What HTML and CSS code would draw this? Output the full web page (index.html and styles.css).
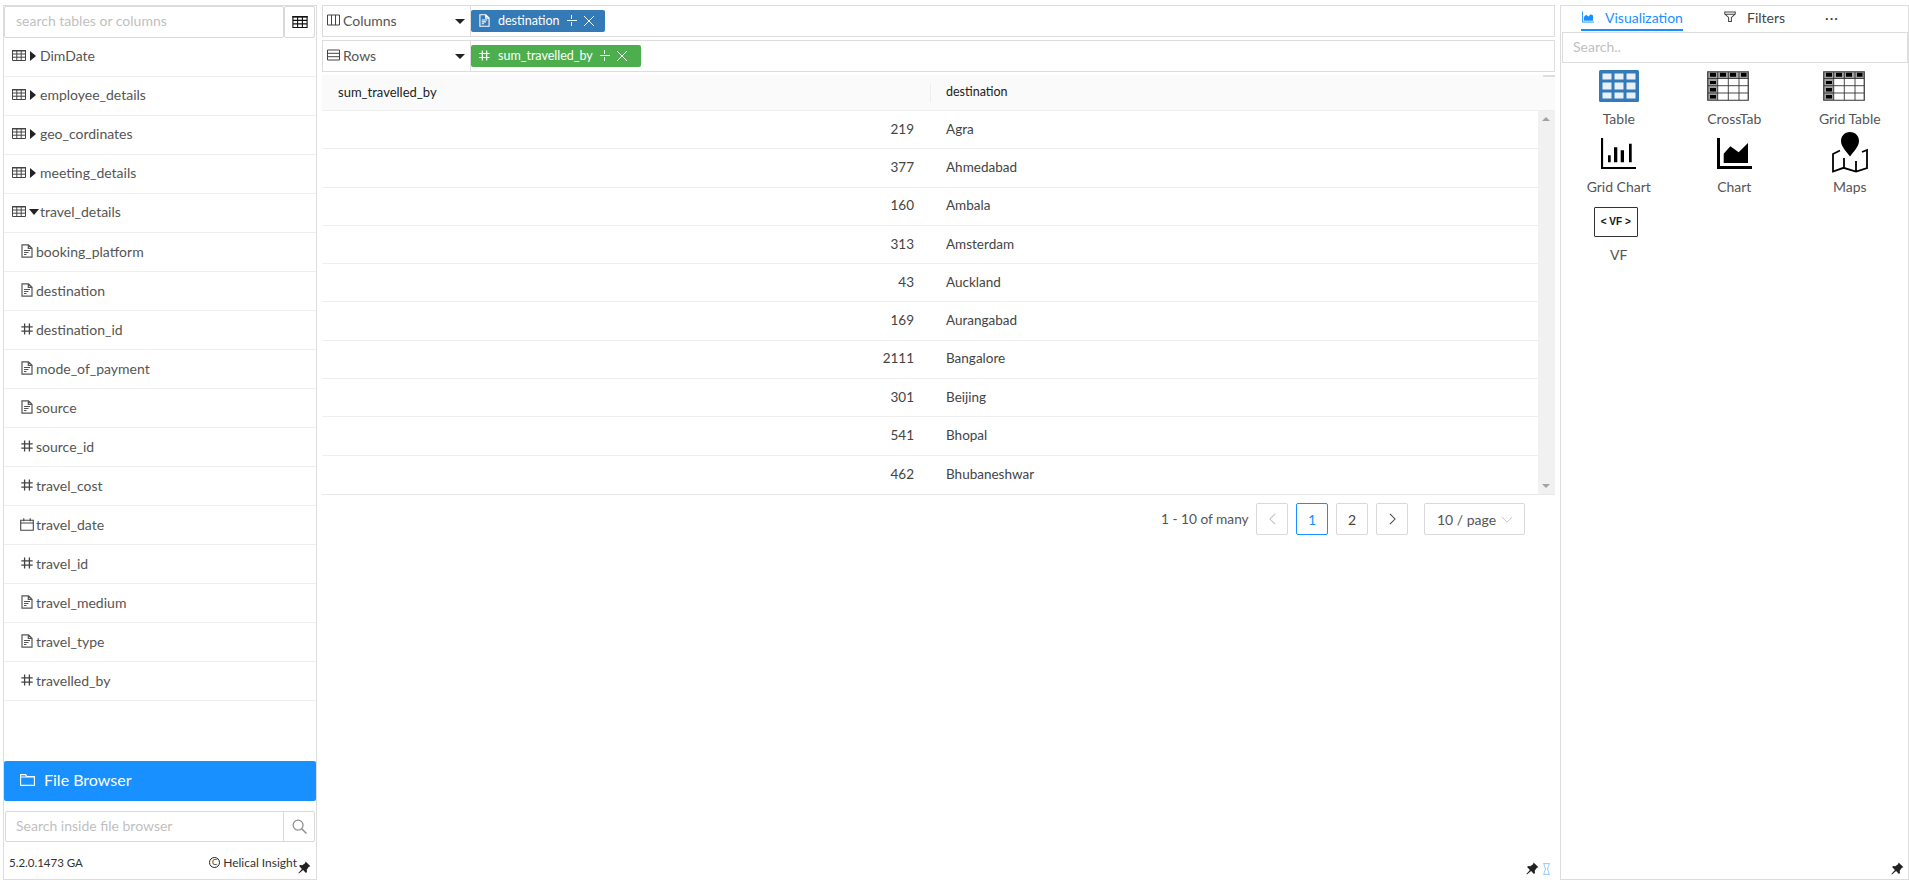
FILE: index.html
```html
<!DOCTYPE html>
<html lang="en">
<head>
<meta charset="utf-8">
<title>Helical Insight</title>
<link rel="stylesheet" href="styles.css">
</head>
<body>
<svg class="defs" width="0" height="0" aria-hidden="true">
  <symbol id="i-text" viewBox="0 0 12 14"><path d="M1 .8h6.500L11 4.300v8.900H1z M7.300 1v3.400H11" fill="none" stroke="currentColor" stroke-width="1.200"/><path d="M3 6.500h6M3 8.500h4.500M3 10.500h2.500" stroke="currentColor" stroke-width="1.200"/></symbol>
  <symbol id="i-hash" viewBox="0 0 12 12"><path d="M3.600 .5v11M8.400 .5v11M.3 3.800h11.400M.3 8.200h11.400" fill="none" stroke="currentColor" stroke-width="1.300"/></symbol>
  <symbol id="i-cal" viewBox="0 0 14 13"><path d="M.7 2.200h12.600v10.100H.7zM.7 5h12.600M3.800 .3v3M10.200 .3v3" fill="none" stroke="currentColor" stroke-width="1.100"/></symbol>
  <symbol id="i-grid" viewBox="0 0 14 11"><path d="M.5.500h13v10H.5z" fill="none" stroke="currentColor"/><path d="M0 0h14v1.500H0z" fill="currentColor"/><path d="M.5 4h13M.5 7.200h13M4.800.500v10M9.200.500v10" fill="none" stroke="currentColor"/></symbol>
  <symbol id="i-pin" viewBox="0 0 14 14"><path d="M8.200.6l5.200 5-1.700.7-2.300 3.200.3 2.300-1.200 1-3-3L1 13.500l-.6-.6 3.800-4.400-3-3 1-1.100 2.300.3 3.100-2.300z" fill="currentColor"/></symbol>
  <symbol id="i-cross" viewBox="0 0 42 30"><path d="M.750.750h40.500v28.500H.750z" fill="#fff"/><path d="M1 1h40v6.500H1zM1 7.500h9.700V29H1z" fill="#a0a0a0"/><path d="M3 1.700h6v4H3zM13 1.700h6v4h-6zM23 1.700h6v4h-6zM34 1.700h5.500v4H34zM3 10h6v3H3zM3 17h6v3.500H3zM3 24h6v3.500H3z" fill="#000"/><path d="M1 7.500h40M1 14.700h40M1 22h40M10.700 1v28M21.300 1v28M32 1v28" fill="none" stroke="#333" stroke-width=".9"/><path d="M.750.750h40.500v28.500H.750z" fill="none" stroke="#333" stroke-width="1.200"/></symbol>
</svg>

<div class="app">
  <aside class="panel left">
    <div class="search-row">
      <div class="search-box">search tables or columns</div>
      <div class="search-btn"><svg class="ic-grid"><use href="#i-grid"/></svg></div>
    </div>
    <ul class="tree">
      <li class="row group"><svg class="ic-grid"><use href="#i-grid"/></svg><span class="caret"></span>DimDate</li>
      <li class="row group"><svg class="ic-grid"><use href="#i-grid"/></svg><span class="caret"></span>employee_details</li>
      <li class="row group"><svg class="ic-grid"><use href="#i-grid"/></svg><span class="caret"></span>geo_cordinates</li>
      <li class="row group"><svg class="ic-grid"><use href="#i-grid"/></svg><span class="caret"></span>meeting_details</li>
      <li class="row group"><svg class="ic-grid"><use href="#i-grid"/></svg><span class="caret down"></span>travel_details</li>
      <li class="row field"><span class="fi"><svg class="ic-t"><use href="#i-text"/></svg></span>booking_platform</li>
      <li class="row field"><span class="fi"><svg class="ic-t"><use href="#i-text"/></svg></span>destination</li>
      <li class="row field"><span class="fi"><svg class="ic-h"><use href="#i-hash"/></svg></span>destination_id</li>
      <li class="row field"><span class="fi"><svg class="ic-t"><use href="#i-text"/></svg></span>mode_of_payment</li>
      <li class="row field"><span class="fi"><svg class="ic-t"><use href="#i-text"/></svg></span>source</li>
      <li class="row field"><span class="fi"><svg class="ic-h"><use href="#i-hash"/></svg></span>source_id</li>
      <li class="row field"><span class="fi"><svg class="ic-h"><use href="#i-hash"/></svg></span>travel_cost</li>
      <li class="row field"><span class="fi"><svg class="ic-c"><use href="#i-cal"/></svg></span>travel_date</li>
      <li class="row field"><span class="fi"><svg class="ic-h"><use href="#i-hash"/></svg></span>travel_id</li>
      <li class="row field"><span class="fi"><svg class="ic-t"><use href="#i-text"/></svg></span>travel_medium</li>
      <li class="row field"><span class="fi"><svg class="ic-t"><use href="#i-text"/></svg></span>travel_type</li>
      <li class="row field"><span class="fi"><svg class="ic-h"><use href="#i-hash"/></svg></span>travelled_by</li>
    </ul>
    <div class="file-browser">
      <svg class="ic-folder" viewBox="0 0 15 12"><path d="M.6.6h5l1.400 2h7.400v8.800H.6zM.6 3h13.800" fill="none" stroke="currentColor" stroke-width="1.100"/></svg>
      <span>File Browser</span>
    </div>
    <div class="fb-search">
      <div class="fb-input">Search inside file browser</div>
      <div class="fb-btn"><svg class="ic-search" viewBox="0 0 16 16"><circle cx="6.500" cy="6.500" r="5.300" fill="none" stroke="currentColor" stroke-width="1.300"/><path d="M10.400 10.400l5 5" stroke="currentColor" stroke-width="1.500"/></svg></div>
    </div>
    <div class="foot">
      <span class="version">5.2.0.1473 GA</span>
      <span class="copy"><span class="c-mark">C</span>Helical Insight</span>
      <svg class="pin foot-pin"><use href="#i-pin"/></svg>
    </div>
  </aside>

  <main class="center">
    <div class="shelf">
      <div class="shelf-label">
        <svg class="ic-shelf" viewBox="0 0 13 12"><path d="M.5 1h12v10H.5zM4.500 1v10M8.500 1v10" fill="none" stroke="currentColor"/></svg>
        <span class="shelf-name">Columns</span><span class="shelf-caret"></span>
      </div>
      <div class="chip blue"><svg class="ic-chip"><use href="#i-text"/></svg><span class="chip-text">destination</span><span class="chip-split"></span><span class="chip-x"></span></div>
    </div>
    <div class="shelf">
      <div class="shelf-label">
        <svg class="ic-shelf" viewBox="0 0 13 12"><path d="M.5 1h12v10H.5zM.5 4.300h12M.5 7.700h12" fill="none" stroke="currentColor"/></svg>
        <span class="shelf-name">Rows</span><span class="shelf-caret"></span>
      </div>
      <div class="chip green"><svg class="ic-chip hash"><use href="#i-hash"/></svg><span class="chip-text">sum_travelled_by</span><span class="chip-split"></span><span class="chip-x"></span></div>
    </div>

    <div class="grid-wrap">
      <div class="grid-head">
        <div class="hc hc-a">sum_travelled_by</div>
        <div class="hc hc-b">destination</div>
        <div class="head-sb"></div>
      </div>
      <div class="grid-body">
        <div class="rows">
          <div class="tr"><div class="num">219</div><div class="txt">Agra</div></div>
          <div class="tr"><div class="num">377</div><div class="txt">Ahmedabad</div></div>
          <div class="tr"><div class="num">160</div><div class="txt">Ambala</div></div>
          <div class="tr"><div class="num">313</div><div class="txt">Amsterdam</div></div>
          <div class="tr"><div class="num">43</div><div class="txt">Auckland</div></div>
          <div class="tr"><div class="num">169</div><div class="txt">Aurangabad</div></div>
          <div class="tr"><div class="num">2111</div><div class="txt">Bangalore</div></div>
          <div class="tr"><div class="num">301</div><div class="txt">Beijing</div></div>
          <div class="tr"><div class="num">541</div><div class="txt">Bhopal</div></div>
          <div class="tr"><div class="num">462</div><div class="txt">Bhubaneshwar</div></div>
        </div>
        <div class="vbar"><span class="arr up"></span><span class="arr dn"></span></div>
      </div>
    </div>

    <div class="pager">
      <span class="total">1 - 10 of many</span>
      <span class="pg muted"><svg class="chev" viewBox="0 0 8 14"><path d="M7 1L1 7l6 6" fill="none" stroke="currentColor" stroke-width="1.200"/></svg></span>
      <span class="pg active">1</span>
      <span class="pg">2</span>
      <span class="pg"><svg class="chev" viewBox="0 0 8 14"><path d="M1 1l6 6-6 6" fill="none" stroke="currentColor" stroke-width="1.200"/></svg></span>
      <span class="pg-size">10 / page<svg class="size-chev" viewBox="0 0 14 8"><path d="M1 1l6 6 6-6" fill="none" stroke="currentColor" stroke-width="1"/></svg></span>
    </div>

    <div class="center-foot">
      <svg class="pin"><use href="#i-pin"/></svg>
      <svg class="hourglass" viewBox="0 0 8 12"><path d="M.8.6h6.400M.8 11.400h6.400M1.500.6c0 3 1.500 4 1.500 5.400S1.500 8.500 1.500 11.400M6.500.6c0 3-1.500 4-1.500 5.400s1.500 2.500 1.500 5.400" fill="none" stroke="currentColor"/></svg>
    </div>
  </main>

  <aside class="panel right">
    <div class="tabs">
      <div class="tab active">
        <svg class="ic-tab" viewBox="0 0 13 12"><path d="M.5 0v11.500H13" fill="none" stroke="currentColor"/><path d="M2 10V6l2.500-2.500L7 5.500 9.500 3 12 4.500V10z" fill="currentColor"/></svg>
        Visualization
      </div>
      <div class="tab filt">
        <svg class="ic-tab" viewBox="0 0 13 12"><path d="M.8.600h11.400v2.200L8 6.500V11H5V6.500L.8 2.800zM1.500 3h10" fill="none" stroke="currentColor" stroke-width="1.100"/></svg>
        Filters
      </div>
      <div class="tab dots">···</div>
    </div>
    <div class="viz-search">Search..</div>
    <div class="viz-grid">
      <div class="viz">
        <div class="viz-ic"><svg class="v-table" viewBox="0 0 40 32"><rect width="40" height="32" rx="1.500" fill="#337ab7"/><path d="M3.500 3.500h9v6h-9zM15.500 3.500h9v6h-9zM27.500 3.500h9v6h-9zM3.500 12.500h9v7h-9zM15.500 12.500h9v7h-9zM27.500 12.500h9v7h-9zM3.500 22.500h9v6h-9zM15.500 22.500h9v6h-9zM27.500 22.500h9v6h-9z" fill="#e8f0f8"/></svg></div>
        <div class="viz-name">Table</div>
      </div>
      <div class="viz">
        <div class="viz-ic"><svg class="v-cross"><use href="#i-cross"/></svg></div>
        <div class="viz-name">CrossTab</div>
      </div>
      <div class="viz">
        <div class="viz-ic"><svg class="v-cross"><use href="#i-cross"/></svg></div>
        <div class="viz-name">Grid Table</div>
      </div>
      <div class="viz">
        <div class="viz-ic"><svg class="v-chart" viewBox="0 0 35 31"><path d="M1 0v30h34" fill="none" stroke="#000" stroke-width="2.200"/><path d="M7 17.300h2.700v7H7zM13 9.300h3.300v15H13zM19.700 12.300H23v12h-3.300zM28 5.700h2.700v18.600H28z" fill="#000"/></svg></div>
        <div class="viz-name">Grid Chart</div>
      </div>
      <div class="viz">
        <div class="viz-ic"><svg class="v-chart" viewBox="0 0 35 31"><path d="M1.500 0v29.500H35" fill="none" stroke="#000" stroke-width="3"/><path d="M6.700 15.700l6.600-7.400 8.400 6L31 5v20H6.700z" fill="#000"/></svg></div>
        <div class="viz-name">Chart</div>
      </div>
      <div class="viz">
        <div class="viz-ic"><svg class="v-map" viewBox="0 0 36 41"><path d="M8 18.500L1 22v17.500l10.500-3.700L24 39.500 35 36V18l-5 2M12 36V26M24 39V29" fill="none" stroke="#000" stroke-width="1.800"/><path d="M18 0c5.500 0 9 4 9 9 0 5.500-5 10-9 15.500C14 19 9 14.500 9 9c0-5 3.500-9 9-9z" fill="#000"/></svg></div>
        <div class="viz-name">Maps</div>
      </div>
      <div class="viz">
        <div class="viz-ic"><div class="v-vf">&lt; VF &gt;</div></div>
        <div class="viz-name">VF</div>
      </div>
    </div>
    <svg class="pin right-pin"><use href="#i-pin"/></svg>
  </aside>
</div>
</body>
</html>
```
FILE: styles.css
```css
* { box-sizing: border-box; }
html, body { margin: 0; height: 100%; overflow: hidden; background: #fff; }
body { font-family: "Lato", "Liberation Sans", sans-serif; font-size: 14px; color: #555; }
.defs { position: absolute; }
.app { display: flex; height: 880px; padding: 5px 0 0 3px; }

.panel { position: relative; border: 1px solid #ddd; background: #fff; }
.left { width: 314px; display: flex; flex-direction: column; flex: none; }
.search-row { display: flex; height: 32px; }
.search-box { width: 280px; height: 32px; border: 1px solid #d9d9d9; border-radius: 2px; padding: 0 11px; line-height: 28px; color: #bfbfbf; }
.search-btn { width: 31px; height: 32px; border: 1px solid #d9d9d9; border-radius: 2px; display: flex; align-items: center; justify-content: center; color: #222; }
.ic-grid { width: 14px; height: 11px; color: #444; flex: none; }
.search-btn .ic-grid { width: 16px; height: 12px; color: #111; }

.tree { list-style: none; margin: 0; padding: 0; flex: 1; }
.row { height: 39px; display: flex; align-items: center; padding: 0 0 2px 8px; border-bottom: 1px solid #eee; color: #555; }
.group { padding-bottom: 3px; }
.caret { width: 0; height: 0; margin: 0 4px 0 4px; border-left: 6px solid #222; border-top: 5px solid transparent; border-bottom: 5px solid transparent; }
.caret.down { margin: 0 1px 0 3px; border-left: 5px solid transparent; border-right: 5px solid transparent; border-top: 6px solid #222; border-bottom: 0; }
.field { padding-left: 13px; }
.fi { width: 19px; display: flex; justify-content: center; flex: none; }
.ic-t { width: 12px; height: 14px; color: #555; }
.ic-h { width: 12px; height: 12px; color: #444; }
.ic-c { width: 14px; height: 13px; color: #444; }

.file-browser { height: 40px; margin-bottom: 10px; padding: 0 0 3px 16px; background: #1890ff; color: #fff; font-size: 16px; display: flex; align-items: center; border-radius: 2px; flex: none; }
.ic-folder { width: 15px; height: 12px; margin-right: 9px; }
.fb-search { display: flex; height: 31px; margin: 0 1px; border: 1px solid #d9d9d9; border-radius: 2px; width: 310px; flex: none; }
.fb-input { flex: 1; padding: 0 10px; line-height: 28px; color: #bfbfbf; }
.fb-btn { width: 31px; border-left: 1px solid #d9d9d9; display: flex; align-items: center; justify-content: center; color: #8c8c8c; }
.ic-search { width: 15px; height: 15px; }
.foot { position: relative; flex: none; height: 37px; display: flex; justify-content: space-between; align-items: center; padding: 4px 19px 0 5px; font-size: 12px; color: #333; }
.version { font-size: 11.500px; }
.copy { display: flex; align-items: center; }
.c-mark { width: 11px; height: 11px; border: 1px solid #222; border-radius: 50%; font-size: 8px; line-height: 9px; text-align: center; margin-right: 3px; }
.pin { width: 13px; height: 13px; color: #222; flex: none; }
.foot-pin { position: absolute; right: 5px; top: 19px; }

.center { width: 1233px; margin: 0 5px; flex: none; display: flex; flex-direction: column; }
.shelf { display: flex; height: 32px; margin-bottom: 3px; border: 1px solid #ddd; }
.shelf-label { width: 148px; border-right: 1px solid #ddd; display: flex; align-items: center; padding: 0 0 2px 4px; color: #555; }
.ic-shelf { width: 13px; height: 12px; margin-right: 3px; color: #444; }
.shelf-name { flex: 1; }
.shelf-caret { width: 0; height: 0; margin: 2px 5px 0 0; border-left: 5px solid transparent; border-right: 5px solid transparent; border-top: 5px solid #222; }
.chip { height: 22px; margin-top: 4px; border-radius: 2px; color: #fff; font-size: 12.500px; display: flex; align-items: center; padding: 0 0 1px 8px; }
.blue { background: #337ab7; width: 134px; }
.green { background: #4cae4c; width: 170px; }
.ic-chip { width: 11px; height: 13px; margin-right: 8px; flex: none; }
.chip-text { white-space: nowrap; }
.chip-split { position: relative; width: 10px; height: 11px; margin: 0 7px 0 7px; flex: none; background: linear-gradient(#dfe, #dfe) center / 100% 1px no-repeat, linear-gradient(#dfe, #dfe) center top / 1px 4px no-repeat, linear-gradient(#dfe, #dfe) center bottom / 1px 4px no-repeat; }
.chip-x { position: relative; width: 10px; height: 10px; flex: none; background: linear-gradient(45deg, transparent 46%, #fff 46%, #fff 54%, transparent 54%), linear-gradient(-45deg, transparent 46%, #fff 46%, #fff 54%, transparent 54%); }

.grid-wrap { font-size: 13px; }
.grid-head { position: relative; display: flex; height: 36px; background: #fafafa; border-bottom: 1px solid #eee; color: #222; }
.hc { display: flex; align-items: center; padding: 0 0 2px 16px; }
.hc-a { width: 608px; }
.hc-b { position: relative; flex: 1; font-size: 12.500px; }
.hc-b::before { content: ""; position: absolute; left: 0; top: 8px; bottom: 8px; width: 1px; background: #eee; }
.head-sb { position: absolute; top: 0; right: 0; width: 12px; height: 2px; background: #ddd; }
.grid-body { display: flex; height: 384px; border-bottom: 1px solid #e8e8e8; }
.rows { flex: 1; font-size: 13.500px; color: #444; }
.tr { display: flex; height: 38.300px; padding-bottom: 2px; border-bottom: 1px solid #eee; align-items: center; }
.tr:last-child { border-bottom: 0; }
.num { width: 608px; text-align: right; padding-right: 16px; }
.txt { padding-left: 16px; }
.vbar { position: relative; width: 17px; background: #f1f1f1; }
.arr { position: absolute; left: 4px; width: 0; height: 0; border-left: 4px solid transparent; border-right: 4px solid transparent; }
.arr.up { top: 6px; border-bottom: 4px solid #a3a3a3; }
.arr.dn { bottom: 6px; border-top: 4px solid #a3a3a3; }

.pager { display: flex; align-items: center; margin-top: 8px; padding-left: 839px; height: 32px; font-size: 14px; color: #555; }
.total { width: 95px; white-space: nowrap; font-size: 13.700px; padding-bottom: 2px; }
.pg { width: 32px; height: 32px; margin-right: 8px; border: 1px solid #d9d9d9; border-radius: 2px; display: flex; align-items: center; justify-content: center; color: #444; }
.pg.muted { color: #bfbfbf; }
.pg.active { border-color: #1890ff; color: #1890ff; }
.chev { width: 7px; height: 12px; }
.pg-size { width: 101px; height: 32px; margin-left: 8px; border: 1px solid #d9d9d9; border-radius: 2px; display: flex; align-items: center; justify-content: space-between; padding: 0 11px 0 12px; }
.size-chev { width: 12px; height: 7px; color: #bfbfbf; }
.center-foot { margin-top: auto; height: 18px; display: flex; justify-content: flex-end; align-items: flex-start; gap: 3px; padding-right: 4px; }
.hourglass { width: 9px; height: 12px; color: #8ec8ff; margin-top: 1px; }

.right { width: 349px; flex: none; }
.tabs { display: flex; height: 26px; padding-bottom: 1px; margin-right: 17px; color: #444; }
.tab { height: 25px; display: flex; align-items: center; white-space: nowrap; padding-bottom: 3px; }
.tab.active { margin-left: 20px; width: 102px; padding-left: 1px; color: #1890ff; border-bottom: 2px solid #1890ff; padding-bottom: 1px; }
.ic-tab { width: 12px; height: 12px; margin-right: 11px; }
.filt { margin-left: 41px; }
.dots { margin-left: 40px; letter-spacing: 1px; }
.viz-search { height: 31px; margin: 0 0 0 1px; border: 1px solid #ddd; padding: 0 10px; line-height: 27px; color: #bfbfbf; }
.viz-grid { display: grid; grid-template-columns: repeat(3, 115.500px); grid-auto-rows: 68px; }
.viz { display: flex; flex-direction: column; align-items: center; height: 68px; }
.viz-ic { height: 40px; display: flex; align-items: flex-end; justify-content: center; }
.viz-name { margin-top: 7px; color: #555; white-space: nowrap; }
.v-table { width: 40px; height: 32px; margin-bottom: 1px; }
.v-cross { width: 42px; height: 30px; margin: 0 12px 2px 0; }
.v-chart { width: 35px; height: 31px; margin-bottom: 2px; }
.v-map { width: 36px; height: 41px; margin-bottom: -2px; }
.v-vf { width: 44px; height: 30px; margin: 0 6px 2px 0; border: 1px solid #333; border-radius: 1px; font: bold 10px/28px "Liberation Sans", sans-serif; text-align: center; color: #111; }
.right-pin { position: absolute; right: 4px; bottom: 4px; }
```
